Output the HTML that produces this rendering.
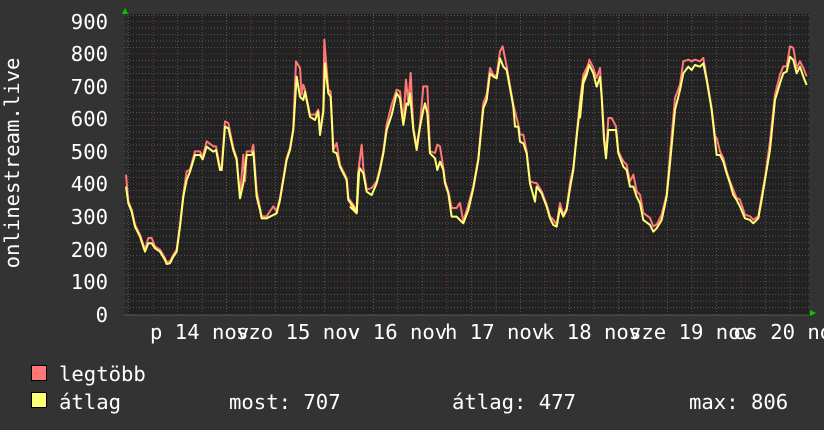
<!DOCTYPE html>
<html><head><meta charset="utf-8"><style>
body{margin:0;background:#333333;width:824px;height:430px;overflow:hidden;position:relative;font-family:"DejaVu Sans Mono","Liberation Mono",monospace;color:#fff}
.t{position:absolute;font-size:20.6px;line-height:20px;white-space:pre}
.yl{right:716px;text-align:right}
</style></head><body>
<svg width="824" height="430" style="position:absolute;left:0;top:0">
<rect x="124" y="14" width="685" height="301" fill="#222222"/>
<rect x="124" y="14" width="4" height="301" fill="#2a2a2a"/>
<g stroke="#555" stroke-width="1" stroke-dasharray="1,2">
<path d="M124 15.5H809M124 28H809M124 34.5H809M124 41H809M124 47.5H809M124 60.5H809M124 67H809M124 73.5H809M124 80H809M124 93H809M124 99.5H809M124 106H809M124 112.5H809M124 125.5H809M124 132H809M124 138.5H809M124 145H809M124 158H809M124 164.5H809M124 171H809M124 177.5H809M124 190.5H809M124 197H809M124 203.5H809M124 210H809M124 223H809M124 229.5H809M124 236H809M124 242.5H809M124 255.5H809M124 262H809M124 268.5H809M124 275H809M124 288H809M124 294.5H809M124 301H809M124 307.5H809"/>
<path d="M128.5 14V315M177.5 14V315M202 14V315M226.5 14V315M275.5 14V315M300 14V315M324.5 14V315M373.5 14V315M398 14V315M422.5 14V315M471.5 14V315M496 14V315M520.5 14V315M569.5 14V315M594 14V315M618.5 14V315M667.5 14V315M692 14V315M716.5 14V315M765.5 14V315M790 14V315"/>
</g>
<g stroke="#7a3636" stroke-width="1" stroke-dasharray="1,2">
<path d="M124 21.5H809M124 54H809M124 86.5H809M124 119H809M124 151.5H809M124 184H809M124 216.5H809M124 249H809M124 281.5H809"/>
<path d="M153 14V315M251 14V315M349 14V315M447 14V315M545 14V315M643 14V315M741 14V315"/>
</g>
<line x1="124" y1="315" x2="809" y2="315" stroke="#555"/>
<polygon points="122,14 128,14 125,8" fill="#00cc00"/>
<polygon points="810,310 810,316 816,313" fill="#00cc00"/>
<g fill="none" stroke-width="6" stroke-linejoin="round">
<g stroke="#ff7777">
<polyline transform="translate(120,28) scale(0.3333)" points="18,440 25,520 35,545 45,590 60,620 75,665 85,630 95,630 105,655 120,665 135,690 140,702 150,700 160,680 170,665 180,590 190,500 200,430 210,425 225,370 240,370 248,388 260,340 280,355 288,355 300,420 305,420 315,280 325,285 340,360 350,390 360,505 370,380 375,460 380,370 395,370 400,350 410,490 420,540 425,565 440,565 460,535 470,550 480,510 500,390 510,360 520,300 528,100 540,120 545,200 550,170 555,185 570,260 585,260 595,245 600,315 610,245 613,35 625,185 632,190 640,365 650,345 660,410 680,450 685,510 700,530 710,550 718,400"/>
<polyline transform="translate(350,28) scale(0.3333)" points="0,530 20,550 25,430 35,350 40,420 50,485 65,480 80,460 90,420 100,370 110,290 125,230 140,185 150,190 160,285 168,155 175,225 182,135 190,300 200,355 210,290 220,175 232,175 240,370 255,375 262,350 270,355 280,420 285,460 295,490 305,540 320,540 330,525 340,580 355,530 370,475 385,390 400,225 410,200 420,120 430,140 440,145 450,70 458,55 470,115 490,230 495,250 505,290 510,320 520,320 530,370 540,460 555,465 560,465 575,490 590,530 600,565 610,575 620,590 630,525 640,560 650,540 660,465 670,420 680,320 690,220 700,140 710,120 718,100"/>
<polyline transform="translate(580,28) scale(0.3333)" points="0,265 10,140 20,135 28,95 40,120 50,150 60,120 65,200 72,320 78,385 85,270 95,270 108,295 115,370 130,400 140,410 150,460 160,440 170,490 180,500 190,555 210,570 220,595 230,590 245,560 260,500 270,380 285,210 300,170 310,100 325,95 335,100 345,95 360,100 370,90 380,150 395,240 405,325 410,330 420,370 430,390 440,430 450,460 460,485 470,510 480,515 495,560 510,565 520,575 535,565 545,505 555,450 570,340 585,200 600,140 610,115 620,115 630,55 640,60 650,120 660,100 670,120 680,145"/>
</g>
<g stroke="#ffff77">
<polyline transform="translate(120,30) scale(0.3333)" points="18,470 25,520 35,545 45,590 60,620 75,665 85,640 95,640 105,655 120,665 135,690 140,702 150,700 160,680 170,665 180,590 190,500 200,450 210,425 225,375 240,375 248,388 260,350 280,365 288,360 300,420 305,420 315,290 325,295 340,360 350,390 360,505 370,460 380,375 395,375 400,365 410,500 420,540 425,565 440,565 460,555 470,550 480,510 500,390 510,360 520,300 530,140 540,200 550,210 555,185 570,260 585,270 595,245 600,315 610,245 615,100 625,190 632,200 640,365 650,370 660,410 680,450 685,510 700,530 710,550 718,420"/>
<polyline transform="translate(350,30) scale(0.3333)" points="0,530 20,550 25,430 30,415 40,430 50,485 65,495 80,460 90,420 100,370 110,300 125,255 140,190 150,205 160,285 170,220 175,225 180,190 190,300 200,360 210,290 220,240 225,220 232,250 240,370 255,385 262,420 270,395 280,420 285,460 295,490 305,560 320,560 330,570 340,580 355,540 370,475 385,390 400,235 410,210 420,130 430,140 440,145 450,85 460,110 470,120 490,230 495,290 505,290 510,335 520,340 530,370 540,460 555,515 560,470 575,490 590,530 600,565 610,585 620,590 630,535 640,560 650,540 660,475 670,420 680,320 690,230 700,150 710,130 718,105"/>
<polyline transform="translate(580,30) scale(0.3333)" points="0,265 10,160 20,135 28,105 40,130 50,170 60,140 65,200 72,330 78,385 85,300 95,300 108,300 115,370 130,410 140,420 150,470 160,470 170,500 180,520 190,570 210,585 220,605 230,595 245,570 260,500 270,400 285,240 300,180 310,130 325,110 335,120 345,105 360,110 370,100 380,150 395,240 405,330 410,375 420,375 430,395 440,430 450,460 460,495 470,510 480,530 495,565 510,570 520,580 535,565 545,510 555,450 570,360 585,210 600,160 610,130 620,125 630,80 640,90 650,130 660,110 670,140 680,165"/>
</g>
</g>
<rect x="31.5" y="365.5" width="15" height="15" fill="#ff7777" stroke="#000"/>
<rect x="31.5" y="392.5" width="15" height="15" fill="#ffff77" stroke="#000"/>
</svg>
<div class="t yl" style="top:12px">900</div>
<div class="t yl" style="top:44px">800</div>
<div class="t yl" style="top:77px">700</div>
<div class="t yl" style="top:109px">600</div>
<div class="t yl" style="top:142px">500</div>
<div class="t yl" style="top:174px">400</div>
<div class="t yl" style="top:207px">300</div>
<div class="t yl" style="top:240px">200</div>
<div class="t yl" style="top:272px">100</div>
<div class="t yl" style="top:305px">0</div>
<div class="t" style="left:-95px;top:153px;width:214px;text-align:center;transform:rotate(-90deg)">onlinestream.live</div>
<div class="t" style="left:150px;top:322px">p 14 nov</div>
<div class="t" style="left:236px;top:322px">szo 15 nov</div>
<div class="t" style="left:348px;top:322px">v 16 nov</div>
<div class="t" style="left:445px;top:322px">h 17 nov</div>
<div class="t" style="left:542px;top:322px">k 18 nov</div>
<div class="t" style="left:629px;top:322px">sze 19 nov</div>
<div class="t" style="left:733px;top:322px">cs 20 nov</div>
<div class="t" style="left:59px;top:364px">legtöbb</div>
<div class="t" style="left:59px;top:392px">átlag</div>
<div class="t" style="left:229px;top:392px">most: 707</div>
<div class="t" style="left:452px;top:392px">átlag: 477</div>
<div class="t" style="left:689px;top:392px">max: 806</div>
</body></html>
